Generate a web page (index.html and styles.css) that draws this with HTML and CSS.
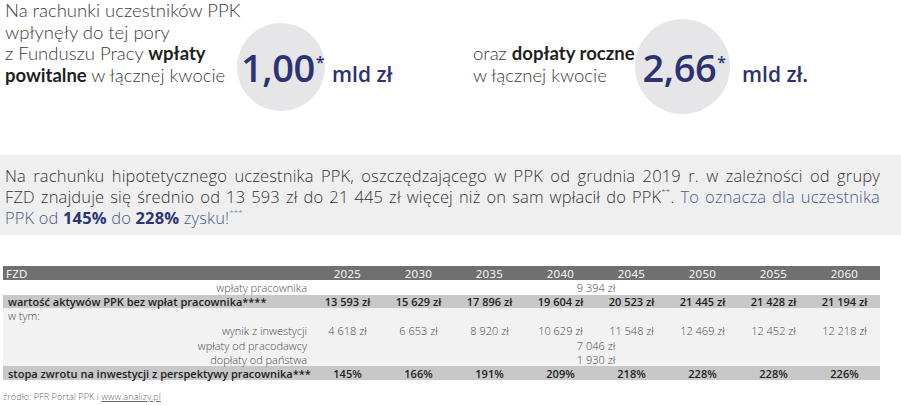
FILE: index.html
```html
<!DOCTYPE html>
<html lang="pl">
<head>
<meta charset="utf-8">
<title>PPK</title>
<link rel="stylesheet" href="styles.css">
</head>
<body>
<div class="page">
  <section class="hero">
    <div class="stat stat-a">
      <p class="lead">Na rachunki uczestników PPK<br>wpłynęły do tej pory<br>z Funduszu Pracy <b>wpłaty</b><br><b>powitalne</b> w łącznej kwocie</p>
      <div class="bubble bubble-a"><span class="num">1,00<span class="star">*</span></span></div>
      <span class="unit unit-a">mld zł</span>
    </div>
    <div class="stat stat-b">
      <p class="lead lead-b">oraz <b>dopłaty roczne</b><br>w łącznej kwocie</p>
      <div class="bubble bubble-b"><span class="num">2,66<span class="star">*</span></span></div>
      <span class="unit unit-b">mld zł.</span>
    </div>
  </section>

  <section class="note">
    <p><span class="line">Na rachunku hipotetycznego uczestnika PPK, oszczędzającego w PPK od grudnia 2019 r. w zależności od grupy</span><span class="line">FZD znajduje się średnio od 13&nbsp;593 zł do 21&nbsp;445 zł więcej niż on sam wpłacił do PPK<sup>**</sup>. <span class="hl">To oznacza dla uczestnika</span></span><span class="hl">PPK od <b>145%</b> do <b>228%</b> zysku!<sup>***</sup></span></p>
  </section>

  <table class="data">
    <colgroup>
      <col class="c-label">
      <col class="c-year"><col class="c-year"><col class="c-year"><col class="c-year">
      <col class="c-year"><col class="c-year"><col class="c-year"><col class="c-year">
    </colgroup>
    <thead>
      <tr class="r-head">
        <th class="l-left">FZD</th>
        <th>2025</th><th>2030</th><th>2035</th><th>2040</th><th>2045</th><th>2050</th><th>2055</th><th>2060</th>
      </tr>
    </thead>
    <tbody>
      <tr class="r-plain r-h15">
        <td class="l-right">wpłaty pracownika</td>
        <td colspan="8">9&nbsp;394 zł</td>
      </tr>
      <tr class="r-strong r-h13">
        <td class="l-left">wartość aktywów PPK bez wpłat pracownika****</td>
        <td>13&nbsp;593 zł</td><td>15&nbsp;629 zł</td><td>17&nbsp;896 zł</td><td>19&nbsp;604 zł</td><td>20&nbsp;523 zł</td><td>21&nbsp;445 zł</td><td>21&nbsp;428 zł</td><td>21&nbsp;194 zł</td>
      </tr>
      <tr class="r-soft r-h15">
        <td class="l-left">w tym:</td>
        <td colspan="8"></td>
      </tr>
      <tr class="r-soft r-h15">
        <td class="l-right">wynik z inwestycji</td>
        <td>4&nbsp;618 zł</td><td>6&nbsp;653 zł</td><td>8&nbsp;920 zł</td><td>10&nbsp;629 zł</td><td>11&nbsp;548 zł</td><td>12&nbsp;469 zł</td><td>12&nbsp;452 zł</td><td>12&nbsp;218 zł</td>
      </tr>
      <tr class="r-soft r-h14">
        <td class="l-right">wpłaty od pracodawcy</td>
        <td colspan="8">7&nbsp;046 zł</td>
      </tr>
      <tr class="r-soft r-h14">
        <td class="l-right">dopłaty od państwa</td>
        <td colspan="8">1&nbsp;930 zł</td>
      </tr>
      <tr class="r-strong r-h14">
        <td class="l-left">stopa zwrotu na inwestycji z perspektywy pracownika***</td>
        <td>145%</td><td>166%</td><td>191%</td><td>209%</td><td>218%</td><td>228%</td><td>228%</td><td>226%</td>
      </tr>
    </tbody>
  </table>

  <p class="source">źródło: PFR Portal PPK i <a class="link">www.analizy.pl</a></p>
</div>
</body>
</html>
```

FILE: styles.css
```css
html, body {
  margin: 0;
  padding: 0;
  background: #ffffff;
}

.page {
  width: 901px;
  height: 405px;
  overflow: hidden;
  font-family: "Open Sans", "DejaVu Sans", sans-serif;
  color: #3a3a3a;
}

/* ---------- hero ---------- */
.hero {
  display: grid;
  grid-template-columns: 473px 1fr;
  align-items: start;
  height: 155px;
  box-sizing: border-box;
}

.stat {
  display: flex;
  align-items: last baseline;
}

.stat-a {
  padding-left: 5px;
}

.stat-b {
  padding-top: 19px;
}

.lead {
  margin: 0;
  font-family: "Lato", "Open Sans", sans-serif;
  font-weight: 300;
  font-size: 18.5px;
  line-height: 21.5px;
  color: #3c3c3c;
  white-space: nowrap;
  flex: none;
  width: 232px;
}

.lead b {
  font-weight: 700;
  color: #1f1f1f;
}

.lead-b {
  width: 162px;
}

.bubble {
  flex: none;
  display: grid;
  place-items: center;
  border-radius: 50%;
  background: #e6e6e8;
}

.bubble-a {
  width: 88px;
  height: 88px;
}

.bubble-b {
  width: 95px;
  height: 95px;
}

.num {
  font-size: 38px;
  line-height: 38px;
  font-weight: 600;
  color: #2d3272;
  letter-spacing: -0.5px;
  padding-left: 3px;
}

.star {
  font-size: 16px;
  line-height: 16px;
  font-weight: 600;
  vertical-align: 14px;
  margin-left: 1px;
}

.unit {
  flex: none;
  font-size: 21px;
  font-weight: 600;
  color: #2d3272;
}

.unit-a {
  margin-left: 7px;
}

.unit-b {
  margin-left: 12px;
}

/* ---------- note ---------- */
.note {
  background: #efefef;
  height: 80px;
  box-sizing: border-box;
  padding: 10px 21px 0 5px;
}

.note p {
  margin: 0;
  font-weight: 300;
  font-size: 16.5px;
  line-height: 21px;
  color: #333333;
  letter-spacing: 0.15px;
}

.line {
  display: block;
  text-align: justify;
  text-align-last: justify;
}

.note sup {
  font-size: 8px;
  line-height: 0;
  vertical-align: 8px;
}

.hl {
  color: #4c5a8e;
}

.hl b {
  font-weight: 700;
  color: #2d3675;
}

/* ---------- table ---------- */
.data {
  margin: 31px 0 0 3px;
  width: 877px;
  border-collapse: collapse;
  table-layout: fixed;
  font-size: 11px;
  line-height: 13px;
}

.c-label {
  width: 309px;
}

.c-year {
  width: 71px;
}

.data th,
.data td {
  padding: 0;
  text-align: center;
  white-space: nowrap;
  vertical-align: middle;
}

.r-head {
  height: 14px;
  background: #707070;
  color: #ffffff;
}

.r-head th {
  font-weight: 400;
  font-size: 11.5px;
  letter-spacing: 0.3px;
}

.data .l-left {
  text-align: left;
  padding-left: 5px;
}

.r-head .l-left {
  padding-left: 3px;
}

.data .l-right {
  text-align: right;
  padding-right: 5px;
}

.r-h13 { height: 13px; }
.r-h14 { height: 14px; }
.r-h15 { height: 15px; }

.r-plain {
  background: #ffffff;
  color: #4a4a4a;
  font-weight: 300;
}

.r-soft {
  background: #f2f2f2;
  color: #4a4a4a;
  font-weight: 300;
}

.r-strong {
  background: #c8c8c8;
  color: #1e1e1e;
  font-weight: 600;
}

/* ---------- source ---------- */
.source {
  margin: 0;
  padding: 11px 0 0 3px;
  font-size: 9.2px;
  line-height: 12px;
  font-weight: 300;
  color: #6a6a6a;
}

.link {
  color: #6a6a6a;
  text-decoration: underline;
}
```
